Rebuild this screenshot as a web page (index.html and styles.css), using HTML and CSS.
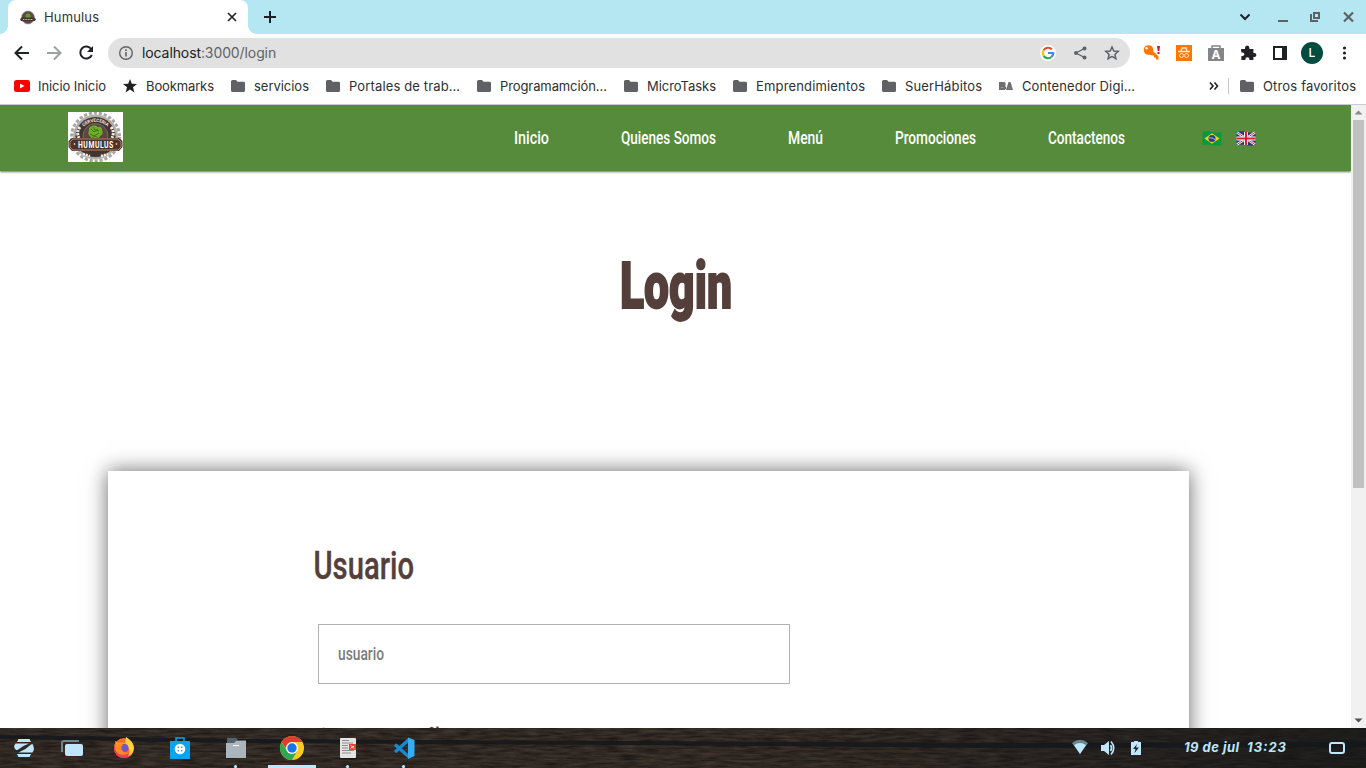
FILE: index.html
```html
<!DOCTYPE html>
<html lang="es">
<head>
<meta charset="utf-8">
<title>Humulus</title>
<link rel="stylesheet" href="styles.css">
</head>
<body>
<svg class="defs" aria-hidden="true">
  <symbol id="folder" viewBox="0 0 14 12"><path d="M0 1.500Q0 0 1.500 0H5L6.500 1.700H12.500Q14 1.700 14 3V10.500Q14 12 12.500 12H1.500Q0 12 0 10.500Z" fill="#5f6164"/></symbol>
</svg>

<div class="tabstrip">
  <div class="tab">
    <svg class="favicon" width="16" height="15" viewBox="0 0 16 15"><circle cx="8" cy="7.500" r="6.500" fill="#5b4a45" stroke="#a09a97" stroke-dasharray="1.300 .8"/><circle cx="8" cy="6" r="2.500" fill="#5f9c2c"/><path d="M0 9l2-1.500h12L16 9l-1 2H1z" fill="#47352f"/><path d="M3 9.500h10" stroke="#c9c0bb" stroke-dasharray="1 .6"/></svg>
    <span class="tab-title">Humulus</span>
    <svg class="tab-close" width="10" height="10" viewBox="0 0 10 10"><path d="M1 1l8 8M9 1l-8 8" stroke="#222428" stroke-width="1.700"/></svg>
  </div>
  <svg class="newtab" width="12" height="12" viewBox="0 0 12 12"><path d="M6 0v12M0 6h12" stroke="#202124" stroke-width="2"/></svg>
  <svg class="window-buttons" width="118" height="20" viewBox="0 0 118 20">
    <path d="M3.500 7.500l4.500 4.500 4.500-4.500" fill="none" stroke="#202124" stroke-width="2"/>
    <path d="M41 14h10" stroke="#5f6164" stroke-width="2"/>
    <path d="M74 7V14H81" fill="none" stroke="#5f6164" stroke-width="2"/><path d="M77 6h5v5h-5z" fill="none" stroke="#5f6164" stroke-width="2"/>
    <path d="M107 5.500l9 9M116 5.500l-9 9" stroke="#5f6164" stroke-width="2.200"/>
  </svg>
</div>

<div class="toolbar">
  <svg class="nav-icons" width="108" height="36" viewBox="0 0 108 36">
    <path d="M29 18H16M22 11.500L15.500 18L22 24.500" fill="none" stroke="#202124" stroke-width="2"/>
    <path d="M47 18H60M54 11.500L60.500 18L54 24.500" fill="none" stroke="#9d9fa1" stroke-width="2"/>
    <path d="M91.300 14.200A6 6 0 1 0 91.800 20" fill="none" stroke="#202124" stroke-width="2"/><path d="M93 11v6h-6z" fill="#202124"/>
  </svg>
  <div class="omnibox">
    <svg width="16" height="16" viewBox="0 0 16 16"><circle cx="8" cy="8" r="6.300" fill="none" stroke="#5f6368" stroke-width="1.400"/><path d="M8 7v4.500M8 4.300V6" stroke="#5f6368" stroke-width="1.600"/></svg>
    <span class="url"><b>localhost</b>:3000/login</span>
    <svg class="omni-icons" width="90" height="24" viewBox="0 0 90 24">
      <circle cx="8" cy="12" r="8" fill="#fff"/>
      <g fill="none" stroke-width="2.200"><path d="M3.600 9.300A5.200 5.200 0 0 1 11.800 8.300" stroke="#ea4335"/><path d="M3.600 9.300A5.600 5.600 0 0 0 3.600 14.800" stroke="#fbbc05"/><path d="M3.600 14.800A5.200 5.200 0 0 0 11.400 16" stroke="#34a853"/><path d="M8 12H13.200Q13.100 14.500 11.400 16" stroke="#4285f4"/></g>
      <path d="M44.500 7.500L36 12L44.500 16.500" fill="none" stroke="#5f6368" stroke-width="1.400"/><g fill="#5f6368"><circle cx="44.500" cy="7.500" r="2"/><circle cx="36" cy="12" r="2"/><circle cx="44.500" cy="16.500" r="2"/></g>
      <path d="M72 6l1.800 4 4.400.4-3.300 3 1 4.300-3.900-2.300-3.900 2.300 1-4.300-3.300-3 4.400-.4z" fill="none" stroke="#5f6368" stroke-width="1.500"/>
    </svg>
  </div>
  <svg class="extensions" width="236" height="36" viewBox="0 0 236 36">
    <g fill="#ff7600"><circle cx="18.500" cy="15" r="4.800"/><path d="M18 19l4-4 6.500 6.500v3H26v-2h-2v-2h-2z"/></g><circle cx="16.500" cy="13.300" r="1.200" fill="#fff"/><path d="M27 11h3l-.7 5h-1.600zM27.500 17h2v2h-2z" fill="#d7102c"/>
    <path d="M46 10h16v16H46z" fill="#ff7600"/><path d="M51 16l1-3h4l1 3M48 16.500h12" fill="none" stroke="#ffe7d0" stroke-width="1.300"/><g fill="none" stroke="#ffe7d0"><circle cx="51.500" cy="20.500" r="2"/><circle cx="56.500" cy="20.500" r="2"/></g>
    <path d="M78 13h16v13H78z" fill="#858585"/><path d="M82 14v-3h8v3" fill="none" stroke="#858585" stroke-width="1.500"/><text x="86" y="24" text-anchor="middle" class="ext-a">A</text>
    <path d="M111 14h4v-1q0-2.500 2.200-2.500t2.200 2.500v1h4v4h1q2 0 2 2t-2 2h-1v3h-4v-1q0-1.800-2-1.800t-2 1.800v1h-4v-4h1q2 0 2-1.800t-2-1.800h-1z" fill="#202124"/>
    <path d="M144 12h12v12h-12z" fill="#fff" stroke="#202124" stroke-width="2"/><path d="M152 12h5v12h-5z" fill="#202124"/>
    <circle cx="182" cy="18" r="11" fill="#004d40"/><text x="182" y="22" text-anchor="middle" class="avatar">L</text>
    <g fill="#202124"><circle cx="214.500" cy="13" r="1.600"/><circle cx="214.500" cy="18" r="1.600"/><circle cx="214.500" cy="23" r="1.600"/></g>
  </svg>
</div>

<div class="bookmarks">
  <span class="bm bm-youtube"><svg width="16" height="12" viewBox="0 0 16 12"><rect width="16" height="12" rx="2.500" fill="#f00"/><path d="M6 3.500v5L10.500 6z" fill="#fff"/></svg><svg class="label" width="70" height="20"><text x="0" y="15" textLength="68">Inicio Inicio</text></svg></span>
  <span class="bm bm-star"><svg width="14" height="14" viewBox="0 0 14 14"><path d="M7 0l1.800 4.800 5.200.3-4 3.200 1.400 5.200L7 10.600l-4.400 2.900L4 8.300 0 5.100l5.200-.3z" fill="#202124"/></svg><svg class="label" width="70" height="20"><text x="0" y="15" textLength="68">Bookmarks</text></svg></span>
  <span class="bm bm-servicios"><svg width="14" height="12"><use href="#folder"/></svg><svg class="label" width="60" height="20"><text x="0" y="15" textLength="55">servicios</text></svg></span>
  <span class="bm bm-portales"><svg width="14" height="12"><use href="#folder"/></svg><svg class="label" width="115" height="20"><text x="0" y="15" textLength="111">Portales de trab…</text></svg></span>
  <span class="bm bm-programacion"><svg width="14" height="12"><use href="#folder"/></svg><svg class="label" width="110" height="20"><text x="0" y="15" textLength="107">Programamción…</text></svg></span>
  <span class="bm bm-micro"><svg width="14" height="12"><use href="#folder"/></svg><svg class="label" width="72" height="20"><text x="0" y="15" textLength="69">MicroTasks</text></svg></span>
  <span class="bm bm-empr"><svg width="14" height="12"><use href="#folder"/></svg><svg class="label" width="112" height="20"><text x="0" y="15" textLength="109">Emprendimientos</text></svg></span>
  <span class="bm bm-suer"><svg width="14" height="12"><use href="#folder"/></svg><svg class="label" width="80" height="20"><text x="0" y="15" textLength="77">SuerHábitos</text></svg></span>
  <span class="bm bm-ba"><svg width="14" height="12"><path d="M0 2h5q1.700 0 1.700 1.900T6 6q1.200.5 1.200 2T5.500 10H0zM7 10l2.500-8h2L14 10z" fill="#6c6e70"/><path d="M2 7.500h2.500M9.500 8h2" stroke="#aaa" stroke-width=".7"/></svg><svg class="label" width="116" height="20"><text x="0" y="15" textLength="113">Contenedor Digi…</text></svg></span>
  <svg class="more" width="10" height="10" viewBox="0 0 10 10"><path d="M1 1.500L4 5 1 8.500M5.500 1.500L8.500 5l-3 3.500" fill="none" stroke="#202124" stroke-width="1.600"/></svg>
  <span class="divider"></span>
  <span class="bm bm-other"><svg width="14" height="12"><use href="#folder"/></svg><svg class="label" width="96" height="20"><text x="0" y="15" textLength="93">Otros favoritos</text></svg></span>
</div>

<div class="viewport">
  <main class="page">
    <header class="site-header">
      <svg class="brand" width="55" height="50" viewBox="0 0 55 50">
        <rect width="55" height="50" fill="#fff"/>
        <circle cx="27.500" cy="25" r="24" fill="none" stroke="#aaa6a4" stroke-width="3" stroke-dasharray="3.200 1.830"/>
        <circle cx="27.500" cy="25" r="22.500" fill="#b1adaa"/>
        <circle cx="27.500" cy="25" r="20" fill="#44342f"/>
        <circle cx="27.500" cy="24" r="12.500" fill="#5a4740" stroke="#8d7d73" stroke-width=".7"/>
        <path id="arc" d="M15 15Q27.500 4.500 40 15" fill="none"/>
        <text class="logo-top"><textPath href="#arc" startOffset="50%" text-anchor="middle">CERVECERIA</textPath></text>
        <path d="M12 15Q8 20 11 26M43 15Q47 20 44 26" fill="none" stroke="#eee8df" stroke-width="3" stroke-dasharray="2.300 1"/>
        <path d="M24 14Q27 12 30 15Q34 14 34 18Q36 22 32 24Q30 29 26 29Q23 27 22 24Q19 22 21 19Q20 15 24 14Z" fill="#6fac28"/>
        <path d="M23 17l3 3 4-3M22 22l4 2 5-3M25 15l2 3 4 1M24 26l3-2 3 2" stroke="#3c7418" fill="none"/>
        <path d="M4 26H51L54.500 29V35L51 39H4L.5 35V29Z" fill="#49352e"/>
        <path d="M5 27H50L53 30V35L50 38H5L2 35V30Z" fill="none" stroke="#d49a72" stroke-width=".8"/>
        <path d="M15 42l7 2M33 44l7-2" stroke="#eee" stroke-width="2.500" stroke-dasharray="2 1"/>
        <g transform="translate(10 36) scale(.72 1)"><text class="logo-name" x="0" y="0" textLength="49">HUMULUS</text></g>
        <circle cx="6.500" cy="32" r=".9" fill="#e8b795"/><circle cx="48.500" cy="32" r=".9" fill="#e8b795"/>
      </svg>
      <nav class="menu">
        <svg width="35" height="26"><text x="0" y="19" textLength="35" lengthAdjust="spacingAndGlyphs">Inicio</text></svg>
        <svg width="95" height="26"><text x="0" y="19" textLength="95" lengthAdjust="spacingAndGlyphs">Quienes Somos</text></svg>
        <svg width="35" height="26"><text x="0" y="19" textLength="35" lengthAdjust="spacingAndGlyphs">Menú</text></svg>
        <svg width="81" height="26"><text x="0" y="19" textLength="81" lengthAdjust="spacingAndGlyphs">Promociones</text></svg>
        <svg width="77" height="26"><text x="0" y="19" textLength="77" lengthAdjust="spacingAndGlyphs">Contactenos</text></svg>
      </nav>
      <div class="flags">
        <svg width="20" height="15" viewBox="0 0 20 15"><path d="M.5 1Q5-.4 10 1T19.500 1V14Q15 15.200 10 14T.5 14Z" fill="#079a3c"/><path d="M2.500 7.500L10 2.200l7.500 5.300L10 12.800z" fill="#fbd116"/><circle cx="10" cy="7.500" r="3.500" fill="#24408e"/><path d="M7 6.800q3-.5 6 1.800" stroke="#fff" stroke-width=".6" fill="none"/></svg>
        <svg width="20" height="15" viewBox="0 0 20 15"><path d="M.5 1Q5-.4 10 1T19.500 1V14Q15 15.200 10 14T.5 14Z" fill="#29337a"/><path d="M1 1.500l18 12M19 1.500l-18 12" stroke="#fff" stroke-width="2.400"/><path d="M1 1.500l18 12M19 1.500l-18 12" stroke="#d32011" stroke-width=".9"/><path d="M10 1v13M.5 7.500h19" stroke="#fff" stroke-width="4"/><path d="M10 1v13M.5 7.500h19" stroke="#d32035" stroke-width="2.200"/></svg>
      </div>
    </header>
    <h1 class="title"><svg width="112" height="80"><text x="-1" y="64" textLength="112" lengthAdjust="spacingAndGlyphs">Login</text></svg></h1>
    <form class="card">
      <svg class="field-label" width="200" height="50"><text x="-.5" y="38" textLength="100.500" lengthAdjust="spacingAndGlyphs">Usuario</text></svg>
      <div class="field"><svg width="60" height="26"><text x="0" y="19" textLength="46" lengthAdjust="spacingAndGlyphs">usuario</text></svg></div>
      <svg class="field-label password-label" width="200" height="50"><text x="0" y="37.300" textLength="142" lengthAdjust="spacingAndGlyphs">Contraseña</text></svg>
    </form>
  </main>
  <div class="scrollbar">
    <svg width="15" height="15"><path d="M3.500 9.500h8l-4-4z" fill="#8b8b8b"/></svg>
    <div class="thumb"></div>
    <svg class="down" width="15" height="15"><path d="M3.500 5.500h8l-4 4z" fill="#505050"/></svg>
  </div>
</div>

<footer class="taskbar">
  <svg width="1366" height="40" viewBox="0 0 1366 40">
    <defs>
      <filter id="grain" x="0" y="0" width="100%" height="100%" color-interpolation-filters="sRGB"><feTurbulence type="fractalNoise" baseFrequency=".05 .4" numOctaves="4" seed="8"/><feColorMatrix values=".22 0 0 0 .09  .19 0 0 0 .07  .17 0 0 0 .055  0 0 0 0 1"/></filter>
      <linearGradient id="shade"><stop offset="0" stop-color="#171718" stop-opacity=".1"/><stop offset=".55" stop-color="#171718" stop-opacity=".1"/><stop offset="1" stop-color="#111517" stop-opacity=".7"/></linearGradient>
    </defs>
    <rect width="1366" height="40" filter="url(#grain)"/><rect width="1366" height="40" fill="url(#shade)"/>
    <path d="M0 7L240 11L620 13L1000 15L1366 14V19L1000 20L620 17L240 15L0 11Z" fill="#14181b" opacity=".88"/>
    <g fill="#bfe6fa"><path d="M18.500 11h11l1.500 3H17zM17 26h14l-1.500 3h-11zM14 18.200L15.500 15.500H29Q22 18 17.500 22H16Q14 20 14 18.200ZM34 21.500L32.500 24.500H18.500Q26 21.500 31 16.500L32.500 16Q34 18 34 21.500Z"/><rect x="65" y="16" width="18" height="12" rx="2"/></g>
    <path d="M62 24v-9q0-2 2-2h15" fill="none" stroke="#71848b" stroke-width="2"/>
    <g><circle cx="124" cy="20" r="10" fill="#ff6a24"/><path d="M114 18q0 12 10 12 7 0 9-6-8 4-14-1z" fill="#f33c5b"/><path d="M126 9q7 4 8 11-1 7-6 8 3-5 0-9-4-3-2-10z" fill="#ffd43b"/><path d="M115 13l4 2q6-2 8 2l-5 3-5 1z" fill="#ff9c21"/><circle cx="124.500" cy="20" r="4" fill="#7656c6"/><path d="M114.500 16q2 1 5 0l4 1q-3 1-2 4 1 4 8 4-10 5-14-3z" fill="#ff8a22"/></g>
    <path d="M170 13h20v18h-20z" fill="#06a5ed"/><path d="M176 13v-3h8v3" fill="none" stroke="#06a5ed" stroke-width="1.500"/><circle cx="180" cy="21" r="5.300" fill="#fff"/><g fill="#178cc4"><circle cx="178.300" cy="19.300" r=".8"/><circle cx="181.700" cy="19.300" r=".8"/><circle cx="178.300" cy="22.700" r=".8"/><circle cx="181.700" cy="22.700" r=".8"/></g>
    <path d="M227 10h9l2 2h8v8h-19z" fill="#53666f"/><path d="M226 15h8l2-2h10v17h-20z" fill="#aab6bb"/><path d="M233 17.500h6" stroke="#fff"/>
    <circle cx="292" cy="20" r="12" fill="#ffcb22"/><path d="M281.600 14A12 12 0 0 1 302.400 14H292L287 22z" fill="#e33b2e"/><path d="M281.600 14A12 12 0 0 0 292 32L297.200 23L287 23z" fill="#2da94f"/><circle cx="292" cy="20" r="6" fill="#fff"/><circle cx="292" cy="20" r="4.700" fill="#1a73e8"/>
    <rect x="340" y="10" width="16" height="20" rx="1" fill="#e3e3e3"/><path d="M342 12.500h7M342 15h11M342 17.500h6M342 20h6M342 22.500h12M342 25h9" stroke="#8d8d8d"/><path d="M349 16h7v6h-7z" fill="#ed4337"/><path d="M351 17.500l3 3M351 20.500q0-2 3-2" stroke="#fff" fill="none" stroke-width=".8"/>
    <path d="M395 16.500L409 29M395 24L409 11.500" stroke="#168bd2" stroke-width="3.200"/><path d="M408 9.500l6.500 2.500v16l-6.500 3z" fill="#36adf2"/>
    <path d="M268 37h48v3h-48z" fill="#bfe6fa"/><g fill="#bfe6fa"><circle cx="235.500" cy="38.500" r="1.600"/><circle cx="347.500" cy="38.500" r="1.600"/><circle cx="403.500" cy="38.500" r="1.600"/></g>
    <path d="M1072 15q8-6.500 16 0l-8 11z" fill="#6e858e"/><path d="M1074 17q6-4 12 0l-6 9z" fill="#bfe6fa"/>
    <path d="M1101 17h3l5-4v14l-5-4h-3z" fill="#bfe6fa"/><path d="M1110.500 17q2 3 0 6M1111 13.500q5.500 6.500 0 13" fill="none" stroke="#bfe6fa" stroke-width="1.600"/>
    <path d="M1131 14h3v-1h4v1h3v13h-10z" fill="#bfe6fa"/><path d="M1137 16l-4 5h2.500l-1 4 4.500-5.500h-3z" fill="#222526"/>
    <text class="clock" x="1184" y="24" textLength="55">19 de jul</text><text class="clock" x="1247" y="24" textLength="39">13:23</text>
    <rect x="1330" y="15" width="14" height="10" rx="2" fill="none" stroke="#bfe6fa" stroke-width="2"/>
  </svg>
</footer>
</body>
</html>
```
FILE: styles.css
```css
* { box-sizing: border-box; }
body { margin: 0; width: 1366px; height: 768px; overflow: hidden; background: #fff; font-family: Inter, sans-serif; display: flex; flex-direction: column; }
svg { display: block; flex: none; }
.defs { position: absolute; width: 0; height: 0; }
.logo-top { font: 700 4.500px Roboto, sans-serif; fill: #eee8df; }
.logo-name { font: 700 9.500px Roboto, sans-serif; fill: #fff; }

.tabstrip { height: 34px; flex: none; background: #b4e7f2; display: flex; align-items: center; padding-left: 8px; }
.tab { width: 240px; height: 34px; background: #fff; border-radius: 8px 8px 0 0; display: flex; align-items: center; padding: 0 11px 0 12px; position: relative; }
.tab::before, .tab::after { content: ""; position: absolute; bottom: 0; width: 8px; height: 8px; }
.tab::before { left: -8px; background: radial-gradient(circle at 0 0, transparent 7.500px, #fff 8px); }
.tab::after { right: -8px; background: radial-gradient(circle at 100% 0, transparent 7.500px, #fff 8px); }
.favicon { margin-right: 8px; }
.tab-title { font-size: 13px; color: #303438; letter-spacing: .15px; flex: 1; }
.newtab { margin-left: 16px; }
.window-buttons { margin-left: auto; margin-right: 11px; }

.toolbar { height: 38px; flex: none; display: flex; align-items: center; }
.omnibox { width: 1022px; height: 30px; border-radius: 15px; background: #e1e1e1; display: flex; align-items: center; padding-left: 10px; }
.url { font-size: 14px; letter-spacing: -.1px; margin-left: 8px; padding-bottom: 1px; color: #5f6368; }
.url b { font-weight: 400; color: #202124; }
.omni-icons { margin-left: auto; }
.ext-a { font: 700 12px Inter, sans-serif; fill: #fff; }
.avatar { font: 500 12px Inter, sans-serif; fill: #fff; }

.bookmarks { height: 33px; flex: none; border-bottom: 1px solid #c9cccf; display: flex; align-items: center; padding: 0 0 4px 14px; }
.bm { display: flex; align-items: center; gap: 9px; flex: none; }
.label text { font: 400 13px Inter, sans-serif; fill: #2c2f33; }
.bm-youtube { width: 109px; gap: 8px; }
.bm-star { width: 108px; }
.bm-servicios { width: 95px; }
.bm-portales { width: 151px; }
.bm-programacion { width: 147px; }
.bm-micro { width: 109px; }
.bm-empr { width: 149px; }
.bm-suer { width: 117px; }
.bm-ba { width: 210px; }
.divider { width: 1px; height: 16px; background: #c5c7c9; margin: 0 11px 0 9px; }

.viewport { height: 623px; flex: none; display: flex; overflow: hidden; }
.page { width: 1351px; height: 623px; overflow: hidden; }
.site-header { height: 66px; background: #558b3b; box-shadow: 0 1px 2px rgba(40, 80, 25, .75); display: flex; align-items: center; padding: 0 95px 0 68px; }
.brand { margin-top: -2px; }
.menu { display: flex; gap: 72px; margin-left: 391px; }
.menu svg { overflow: visible; }
.menu text { font: 500 18px Roboto, sans-serif; fill: #fff; }
.flags { display: flex; gap: 14px; margin-left: 77px; padding-top: 1px; }
.title { margin: 33px 0 0 621px; height: 80px; padding-top: 40px; font-size: 16px; }
.title text { font: 900 64px Roboto, sans-serif; fill: #543f3b; stroke: #543f3b; stroke-width: 1.800px; }
.title svg { overflow: visible; }
.card { width: 1081px; height: 700px; margin: 187px 0 0 108px; background: #fff; box-shadow: 0 0 20px rgba(0, 0, 0, .6); padding: 70px 0 0 206px; }
.field-label text { font: 500 39.500px Roboto, sans-serif; fill: #543f3b; stroke: #543f3b; stroke-width: .4px; }
.field { width: 472px; height: 60px; margin: 33px 0 0 4px; border: 1px solid #b1b1b1; padding: 16px 0 0 19px; }
.field text { font: 500 18px Roboto, sans-serif; fill: #7b7b7b; }
.password-label { margin-top: 35px; }

.scrollbar { width: 15px; height: 623px; background: #f1f1f1; display: flex; flex-direction: column; }
.thumb { width: 11px; height: 368px; margin-left: 2px; background: #c1c1c1; }
.down { margin-top: auto; }
.taskbar { height: 40px; flex: none; }
.clock { font: italic 700 13px Inter, sans-serif; fill: #bfe6fa; }
```
